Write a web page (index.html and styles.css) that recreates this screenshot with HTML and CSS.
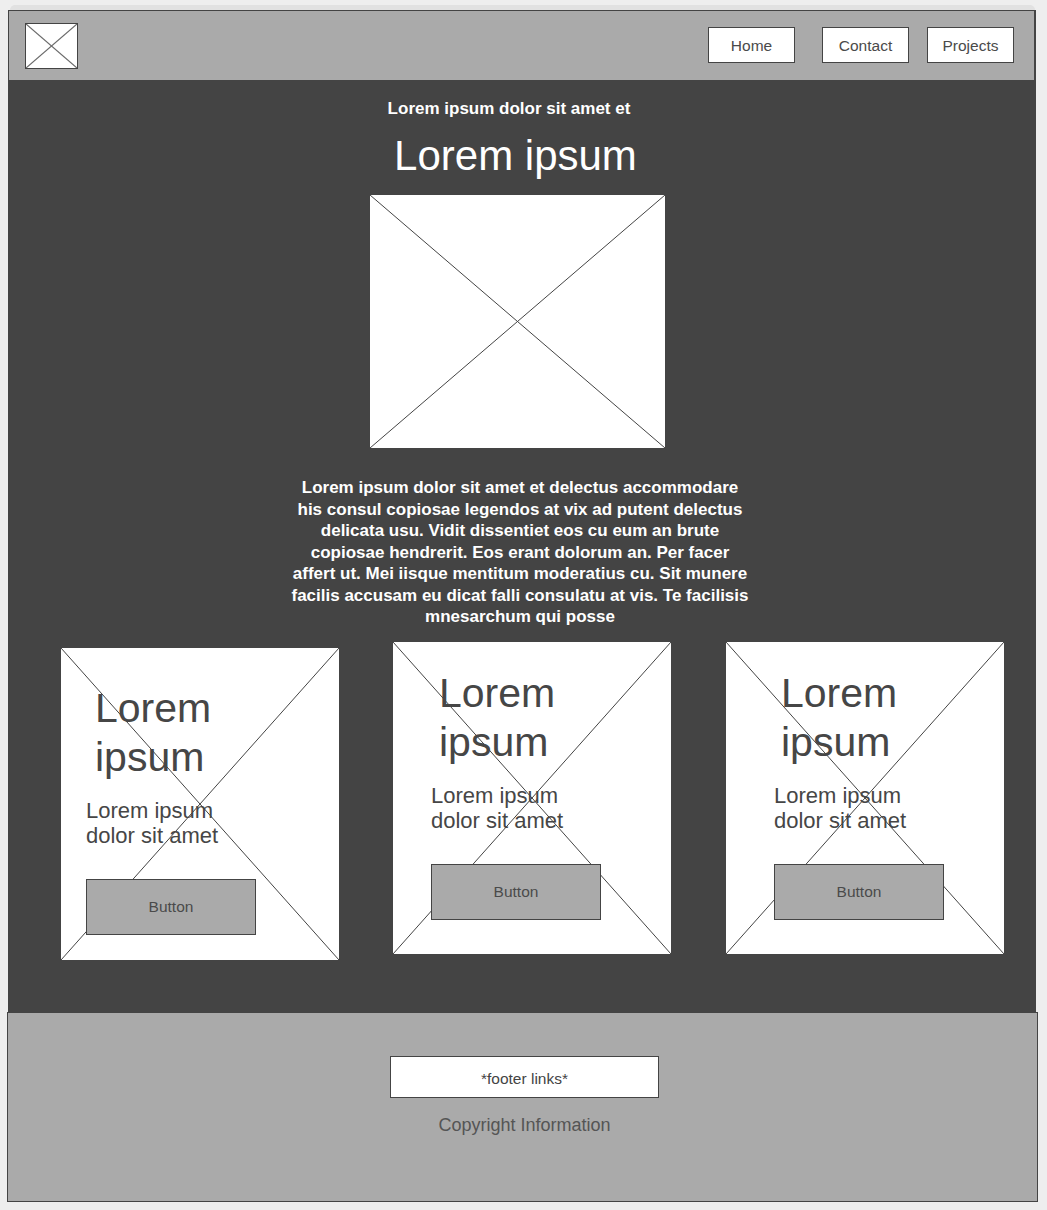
FILE: index.html
```html
<!DOCTYPE html>
<html lang="en">
<head>
  <meta charset="UTF-8" />
  <meta name="viewport" content="width=device-width, initial-scale=1.0" />
  <title>Wireframe</title>
  <link rel="stylesheet" href="styles.css">
</head>
<body>
  <div class="page">
    <div class="top-strip"></div>

    <div class="frame">
      <header>
        <div class="logo">
          <svg viewBox="0 0 51 44" preserveAspectRatio="none">
            <line x1="0" y1="0" x2="51" y2="44" />
            <line x1="51" y1="0" x2="0" y2="44" />
          </svg>
        </div>
        <nav>
          <a class="nav-home" href="#">Home</a>
          <a class="nav-contact" href="#">Contact</a>
          <a class="nav-projects" href="#">Projects</a>
        </nav>
      </header>

      <main>
        <h2 class="intro">Lorem ipsum dolor sit amet et</h2>
        <h1 class="headline">Lorem ipsum</h1>

        <div class="hero-img">
          <svg viewBox="0 0 295 253" preserveAspectRatio="none">
            <line x1="0" y1="0" x2="295" y2="253" />
            <line x1="295" y1="0" x2="0" y2="253" />
          </svg>
        </div>

        <p class="lead">Lorem ipsum dolor sit amet et delectus accommodare his consul copiosae legendos at vix ad putent delectus delicata usu. Vidit dissentiet eos cu eum an brute copiosae hendrerit. Eos erant dolorum an. Per facer affert ut. Mei iisque mentitum moderatius cu. Sit munere facilis accusam eu dicat falli consulatu at vis. Te facilisis mnesarchum qui posse</p>

        <div class="cards">
          <div class="card card-one">
            <svg class="card-x" viewBox="0 0 278 312" preserveAspectRatio="none">
              <line x1="0" y1="0" x2="278" y2="312" />
              <line x1="278" y1="0" x2="0" y2="312" />
            </svg>
            <div class="card-title">Lorem ipsum</div>
            <div class="card-text">Lorem ipsum dolor sit amet</div>
            <a class="card-btn" href="#">Button</a>
          </div>
          <div class="card card-two">
            <svg class="card-x" viewBox="0 0 278 312" preserveAspectRatio="none">
              <line x1="0" y1="0" x2="278" y2="312" />
              <line x1="278" y1="0" x2="0" y2="312" />
            </svg>
            <div class="card-title">Lorem ipsum</div>
            <div class="card-text">Lorem ipsum dolor sit amet</div>
            <a class="card-btn" href="#">Button</a>
          </div>
          <div class="card card-three">
            <svg class="card-x" viewBox="0 0 278 312" preserveAspectRatio="none">
              <line x1="0" y1="0" x2="278" y2="312" />
              <line x1="278" y1="0" x2="0" y2="312" />
            </svg>
            <div class="card-title">Lorem ipsum</div>
            <div class="card-text">Lorem ipsum dolor sit amet</div>
            <a class="card-btn" href="#">Button</a>
          </div>
        </div>
      </main>
    </div>

    <footer>
      <div class="footer-links">*footer links*</div>
      <div class="copyright">Copyright Information</div>
    </footer>
  </div>
</body>
</html>
```

FILE: styles.css
```css
html {
  background-color: #eeeeee;
}

body {
  margin: 0;
  font-family: 'Liberation Sans', Arial, sans-serif;
  color: #444444;
}

.page {
  padding: 5px 0 0 7px;
  width: 1031px;
}

.top-strip {
  margin-left: 3px;
  width: 1025px;
  height: 5px;
  background-color: #e1e1e1;
  border-radius: 6px 6px 0 0;
}

.frame {
  margin-left: 1px;
  width: 1028px;
  padding-top: 1px;
  background-color: #444444;
}

/* Header */
header {
  margin: 0 2px 0 1px;
  height: 69px;
  background-color: #aaaaaa;
  display: flex;
  align-items: center;
  justify-content: space-between;
  padding: 0 20px 0 16px;
  box-sizing: border-box;
}

.logo {
  width: 53px;
  height: 46px;
  box-sizing: border-box;
  border: 1px solid #444;
  background-color: #fff;
  margin-top: 1px;
}

.logo svg {
  display: block;
  width: 100%;
  height: 100%;
}

.logo line {
  stroke: #6a6a6a;
  stroke-width: 1.2;
}

nav {
  display: flex;
  margin-top: -2px;
}

nav a {
  width: 87px;
  height: 36px;
  box-sizing: border-box;
  border: 1px solid #444;
  background-color: #fff;
  color: #4a4a4a;
  text-decoration: none;
  font-size: 15.5px;
  display: flex;
  align-items: center;
  justify-content: center;
  padding-top: 2px;
}

nav .nav-contact {
  margin-left: 27px;
}

nav .nav-projects {
  margin-left: 18px;
}

/* Main */
main {
  height: 932px;
  box-sizing: border-box;
  padding-top: 19px;
  color: #fff;
}

.intro {
  margin: 0;
  padding-right: 26px;
  text-align: center;
  font-size: 17px;
  font-weight: 700;
  line-height: 20px;
}

.headline {
  margin: 13px 0 0;
  padding-right: 13px;
  text-align: center;
  font-size: 42px;
  font-weight: 400;
  line-height: 48px;
}

.hero-img {
  margin: 15px 0 0 362px;
  width: 295px;
  height: 253px;
  background-color: #fff;
}

.hero-img svg,
.card-x {
  display: block;
  width: 100%;
  height: 100%;
}

.hero-img line,
.card-x line {
  stroke: #444;
  stroke-width: 1;
}

.lead {
  margin: 29px 0 0 282px;
  width: 460px;
  text-align: center;
  font-size: 17px;
  font-weight: 700;
  line-height: 21.5px;
}

/* Cards */
.cards {
  display: flex;
  align-items: flex-start;
  gap: 54px;
  margin-top: 14px;
  padding-left: 53px;
}

.card {
  position: relative;
  width: 278px;
  height: 312px;
  box-sizing: border-box;
  background-color: #fff;
  color: #464646;
}

.card-x {
  position: absolute;
  inset: 0;
}

.card > div,
.card > a {
  position: relative;
}

.card-one {
  margin-top: 6px;
  padding: 36px 0 0 25px;
}

.card-two {
  padding: 27px 0 0 38px;
}

.card-three {
  margin-left: 1px;
  padding: 27px 0 0 48px;
}

.card-title {
  width: 190px;
  font-size: 41px;
  line-height: 49px;
}

.card-one .card-title {
  margin-left: 9px;
}

.card-two .card-title {
  margin-left: 8px;
}

.card-three .card-title {
  margin-left: 7px;
}

.card-text {
  margin-top: 16px;
  width: 170px;
  font-size: 22px;
  line-height: 25.5px;
}

.card-btn {
  margin-top: 30px;
  width: 170px;
  height: 56px;
  box-sizing: border-box;
  border: 1px solid #444;
  background-color: #aaaaaa;
  color: #4a4a4a;
  text-decoration: none;
  font-size: 15.5px;
  display: flex;
  align-items: center;
  justify-content: center;
}

/* Footer */
footer {
  width: 1031px;
  height: 190px;
  box-sizing: border-box;
  border: 1px solid #444;
  background-color: #aaaaaa;
  padding: 43px 0 0 4px;
  text-align: center;
}

.footer-links {
  margin: 0 auto;
  width: 269px;
  height: 42px;
  box-sizing: border-box;
  border: 1px solid #444;
  background-color: #fff;
  color: #444;
  font-size: 15.5px;
  line-height: 43px;
}

.copyright {
  margin-top: 17px;
  font-size: 18px;
  color: #555;
}
```
